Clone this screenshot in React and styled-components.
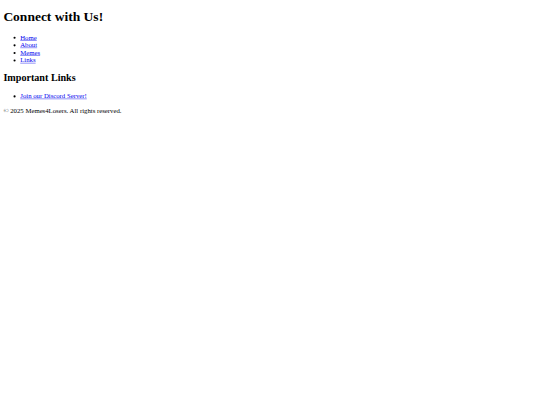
import React from "react";
import styled, { createGlobalStyle } from "styled-components";

const GlobalStyle = createGlobalStyle`
  html, body {
    margin: 0;
    padding: 0;
    background: #ffffff;
    overflow: hidden;
  }
`;

// the reference is a 1280px-wide page shown at 540px
const Viewport = styled.div`
  display: flow-root;
  width: 1280px;
  transform: scale(0.421875);
  transform-origin: 0 0;
`;

const Page = styled.div`
  margin: 8px;
  font-family: "Liberation Serif", "Times New Roman", serif;
  font-size: 16px;
  color: #000000;
`;

const Title = styled.h1`
  font-size: 32px;
  font-weight: bold;
  margin: 0.67em 0;
`;

const SubTitle = styled.h2`
  font-size: 24px;
  font-weight: bold;
  margin: 0.83em 0;
`;

const List = styled.ul`
  margin: 1em 0;
  padding-left: 40px;
  list-style: disc;
`;

const Link = styled.a`
  color: #0000ee;
  text-decoration: underline;
`;

const Footer = styled.footer`
  p {
    margin: 1em 0;
  }
`;

const navItems = ["Home", "About", "Memes", "Links"];

export default function App() {
  return (
    <>
      <GlobalStyle />
      <Viewport>
        <Page>
          <header>
            <Title>Connect with Us!</Title>
            <nav>
              <List>
                {navItems.map(item => (
                  <li key={item}>
                    <Link href="#">{item}</Link>
                  </li>
                ))}
              </List>
            </nav>
          </header>
          <main>
            <SubTitle>Important Links</SubTitle>
            <List>
              <li>
                <Link href="#">Join our Discord Server!</Link>
              </li>
            </List>
          </main>
          <Footer>
            <p>© 2025 Memes4Losers. All rights reserved.</p>
          </Footer>
        </Page>
      </Viewport>
    </>
  );
}
